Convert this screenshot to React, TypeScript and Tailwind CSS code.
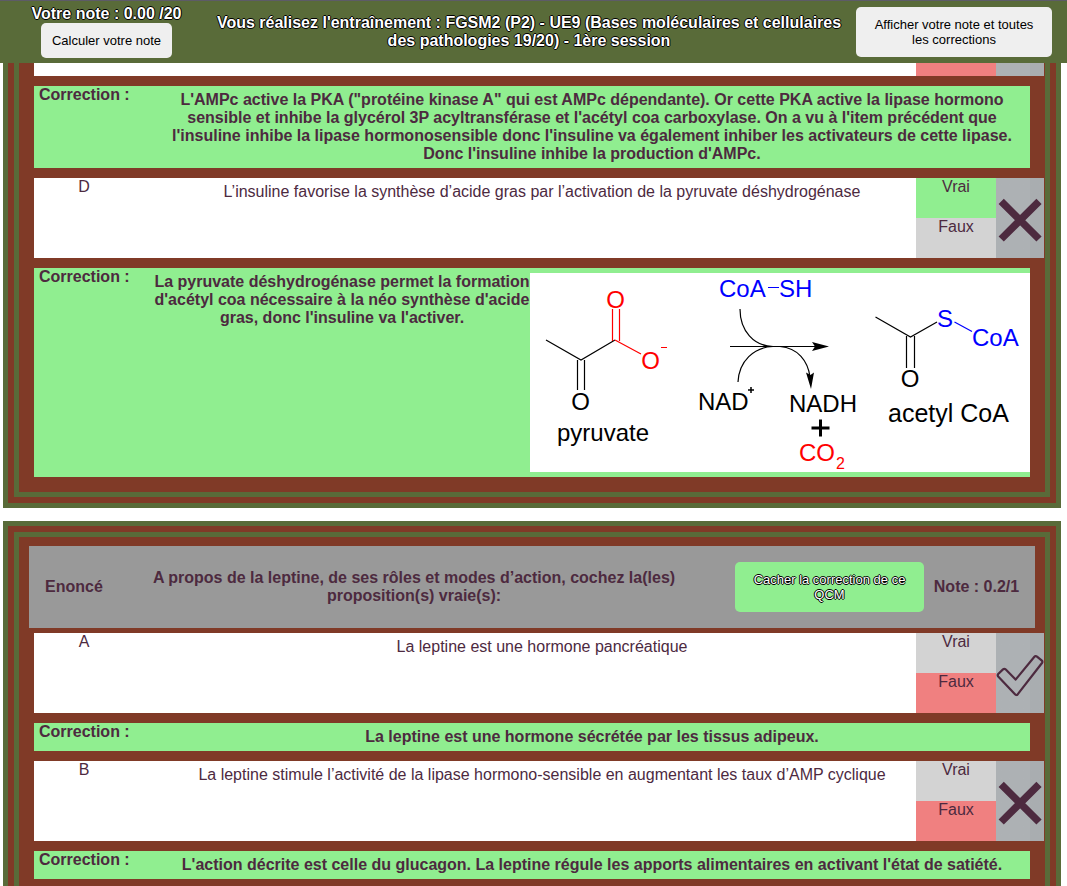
import type { ReactNode } from "react";

const outlined =
  "text-white [text-shadow:-1px_0_#000,0_1px_#000,1px_0_#000,0_-1px_#000]";

function CrossIcon() {
  return (
    <svg viewBox="0 0 48 80" className="h-20 w-12" aria-hidden="true">
      <path d="M5.2 23.4 L43 61 M43 23.4 L5.2 61" stroke="#4d2a3f" strokeWidth="7.4" fill="none" />
    </svg>
  );
}

function CheckIcon() {
  return (
    <svg viewBox="0 0 48 80" className="h-20 w-12" aria-hidden="true">
      <path
        d="M2.2 41 Q1.2 42.4 2.2 43.6 L19 61.3 Q20.4 62.8 21.8 61.2 L46 30 Q47 28.6 45.6 27.4 L41 23.6 Q39.6 22.4 38.4 23.8 L19.6 46.6 L9.8 36.6 Q8.4 35.2 7 36.4 Z"
        stroke="#4d2a3f"
        strokeWidth="2.2"
        strokeLinejoin="round"
        fill="none"
      />
    </svg>
  );
}

function Mark({ children }: { children?: ReactNode }) {
  return (
    <div className="flex w-12 shrink-0 overflow-hidden bg-linear-to-r from-[#adb1b4] from-70% to-[#a9adb0] to-70%">
      {children}
    </div>
  );
}

type Choice = "vrai" | "faux";

function Item({ id, text, picked, good }: { id: string; text: string; picked: Choice; good: boolean }) {
  const vraiColor = picked === "vrai" ? "bg-[#90ee90]" : "bg-[#d3d3d3]";
  const fauxColor = picked === "faux" ? "bg-[#f08080]" : "bg-[#d3d3d3]";
  return (
    <div className="-mr-[14px] flex min-h-20 bg-white">
      <div className="w-[100px] shrink-0 text-center">{id}</div>
      <p className="ml-[34px] flex-1 pt-[5px] text-center">{text}</p>
      <fieldset className="relative flex w-20 shrink-0 flex-col text-center">
        <label className={`flex-1 ${vraiColor}`}>
          <input type="radio" className="sr-only" checked={picked === "vrai"} readOnly />
          Vrai
        </label>
        <label className={`flex-1 ${fauxColor}`}>
          <input type="radio" className="sr-only" checked={picked === "faux"} readOnly />
          Faux
        </label>
      </fieldset>
      <Mark>{good ? <CheckIcon /> : <CrossIcon />}</Mark>
    </div>
  );
}

function Correction({ children, figure }: { children: ReactNode; figure?: ReactNode }) {
  return (
    <div className="flex bg-[#90ee90] font-bold">
      <div className="w-[120px] shrink-0 pl-[5px]">Correction :</div>
      <p className="flex-1 py-[5px] text-center">{children}</p>
      {figure && <div className="shrink-0 py-[5px]">{figure}</div>}
    </div>
  );
}

function Reaction() {
  return (
    <svg
      viewBox="0 0 500 199"
      className="block h-[199px] w-[500px] bg-white font-['Liberation_Sans',Arial,sans-serif] text-[24px] font-normal"
      role="img"
      aria-label="pyruvate, acetyl CoA"
    >
      <g fill="none" stroke="#000" strokeWidth="1.2">
        <path d="M16 67 L51 87 L85 67" />
        <path d="M47.5 87 V117 M54.5 87 V117" />
        <path d="M200 73.5 H286" />
        <path d="M210 36 C210 58 224 73 243 73.5 H250 C268 75 278 88 280 104" />
        <path d="M208 109 C209 88 224 74 243 73.5" />
        <path d="M345.5 44 L380.5 64 L407 49" />
        <path d="M376.5 63 V95 M384.5 63 V95" />
      </g>
      <path d="M299 73.5 L282 69 L285 73.5 L282 78 Z" />
      <path d="M281 116 L276 99.5 L280.5 102 L284 99.5 Z" />
      <g fill="none" stroke="#f00" strokeWidth="1.2">
        <path d="M82.5 36 V68 M89.5 36 V68 M85 67 L111 81 M131 74.5 H137" />
      </g>
      <g fill="none" stroke="#00f" strokeWidth="1.2">
        <path d="M238 14.5 H249 M424.5 49 L442 58.5" />
      </g>
      <path d="M281.5 155 H299.5 M290.5 146.5 V163.5" stroke="#000" strokeWidth="3" />
      <path d="M218 117 H224 M221 114 V120" stroke="#000" strokeWidth="1.5" />
      <g fill="#f00">
        <text x="85.5" y="35" textAnchor="middle">O</text>
        <text x="120.5" y="96" textAnchor="middle">O</text>
        <text x="269" y="188">CO</text>
        <text x="306" y="196" fontSize="16">2</text>
      </g>
      <g fill="#00f">
        <text x="189" y="24">CoA</text>
        <text x="249" y="24">SH</text>
        <text x="415" y="54" textAnchor="middle">S</text>
        <text x="442" y="73">CoA</text>
      </g>
      <g fill="#000">
        <text x="50.5" y="137" textAnchor="middle">O</text>
        <text x="27" y="168">pyruvate</text>
        <text x="168" y="137">NAD</text>
        <text x="259" y="139">NADH</text>
        <text x="380" y="114" textAnchor="middle">O</text>
        <text x="358" y="149" fontSize="25">acetyl CoA</text>
      </g>
    </svg>
  );
}

export default function App() {
  return (
    <div className="flex h-screen flex-col overflow-hidden bg-white font-['Liberation_Sans',Arial,sans-serif] text-[16px] leading-[18px] text-[#4d2a3f]">
      <header className="grid shrink-0 grid-cols-[213px_1fr_218px] border-t border-[#5d5b67] bg-[#596b39] pr-1 pb-[5px]">
        <div className="flex flex-col items-center pt-1">
          <div className={`font-bold ${outlined}`}>Votre note : 0.00 /20</div>
          <button className="rounded-[5px] bg-[#efefef] px-[11px] py-[10px] text-[13px] leading-[15px] text-black">
            Calculer votre note
          </button>
        </div>
        <h1 className={`pt-[13px] text-center font-bold ${outlined}`}>
          Vous réalisez l'entraînement : FGSM2 (P2) - UE9 (Bases moléculaires et cellulaires des
          pathologies 19/20) - 1ère session
        </h1>
        <div className="flex items-start justify-center pt-[6px]">
          <button className="h-[50px] w-[196px] rounded-[5px] bg-[#efefef] px-[10px] text-[13px] leading-[15px] text-black">
            Afficher votre note et toutes les corrections
          </button>
        </div>
      </header>

      <main className="flex min-h-0 flex-1 flex-col gap-[13px] overflow-hidden pr-[6px] pl-[3px]">
        <section className="flex shrink-0 flex-col gap-[10px] border-x-16 border-b-16 border-double border-[#596b39] bg-[#803a27] px-[15px] pb-[15px]">
          <div className="-mr-[14px] flex h-[13px] bg-white">
            <div className="flex-1" />
            <div className="w-20 bg-[#f08080]" />
            <Mark />
          </div>
          <Correction>
            L'AMPc active la PKA ("protéine kinase A" qui est AMPc dépendante). Or cette PKA active la
            lipase hormono sensible et inhibe la glycérol 3P acyltransférase et l'acétyl coa
            carboxylase. On a vu à l'item précédent que l'insuline inhibe la lipase hormonosensible
            donc l'insuline va également inhiber les activateurs de cette lipase. Donc l'insuline
            inhibe la production d'AMPc.
          </Correction>
          <Item
            id="D"
            text="L’insuline favorise la synthèse d’acide gras par l’activation de la pyruvate déshydrogénase"
            picked="vrai"
            good={false}
          />
          <Correction figure={<Reaction />}>
            La pyruvate déshydrogénase permet la formation d'acétyl coa nécessaire à la néo synthèse
            d'acide gras, donc l'insuline va l'activer.
          </Correction>
        </section>

        <section className="flex shrink-0 flex-col gap-[10px] border-16 border-double border-[#596b39] bg-[#803a27] px-[15px] pt-[9px] pb-[15px]">
          <div className="-mx-[5px] -mb-[5px] grid min-h-[82px] grid-cols-[90px_1fr_215px_105px] items-center bg-[#999999] pr-[6px] text-center font-bold">
            <div>Enoncé</div>
            <h2>
              A propos de la leptine, de ses rôles et modes d’action, cochez la(les) proposition(s)
              vraie(s):
            </h2>
            <button
              className={`h-[50px] w-[189px] justify-self-end rounded-[5px] bg-[#90ee90] px-[10px] text-[13px] leading-[15px] font-normal ${outlined}`}
            >
              Cacher la correction de ce QCM
            </button>
            <div>Note : 0.2/1</div>
          </div>
          <Item id="A" text="La leptine est une hormone pancréatique" picked="faux" good />
          <Correction>La leptine est une hormone sécrétée par les tissus adipeux.</Correction>
          <Item
            id="B"
            text="La leptine stimule l’activité de la lipase hormono-sensible en augmentant les taux d’AMP cyclique"
            picked="faux"
            good={false}
          />
          <Correction>
            L'action décrite est celle du glucagon. La leptine régule les apports alimentaires en
            activant l'état de satiété.
          </Correction>
        </section>
      </main>
    </div>
  );
}
